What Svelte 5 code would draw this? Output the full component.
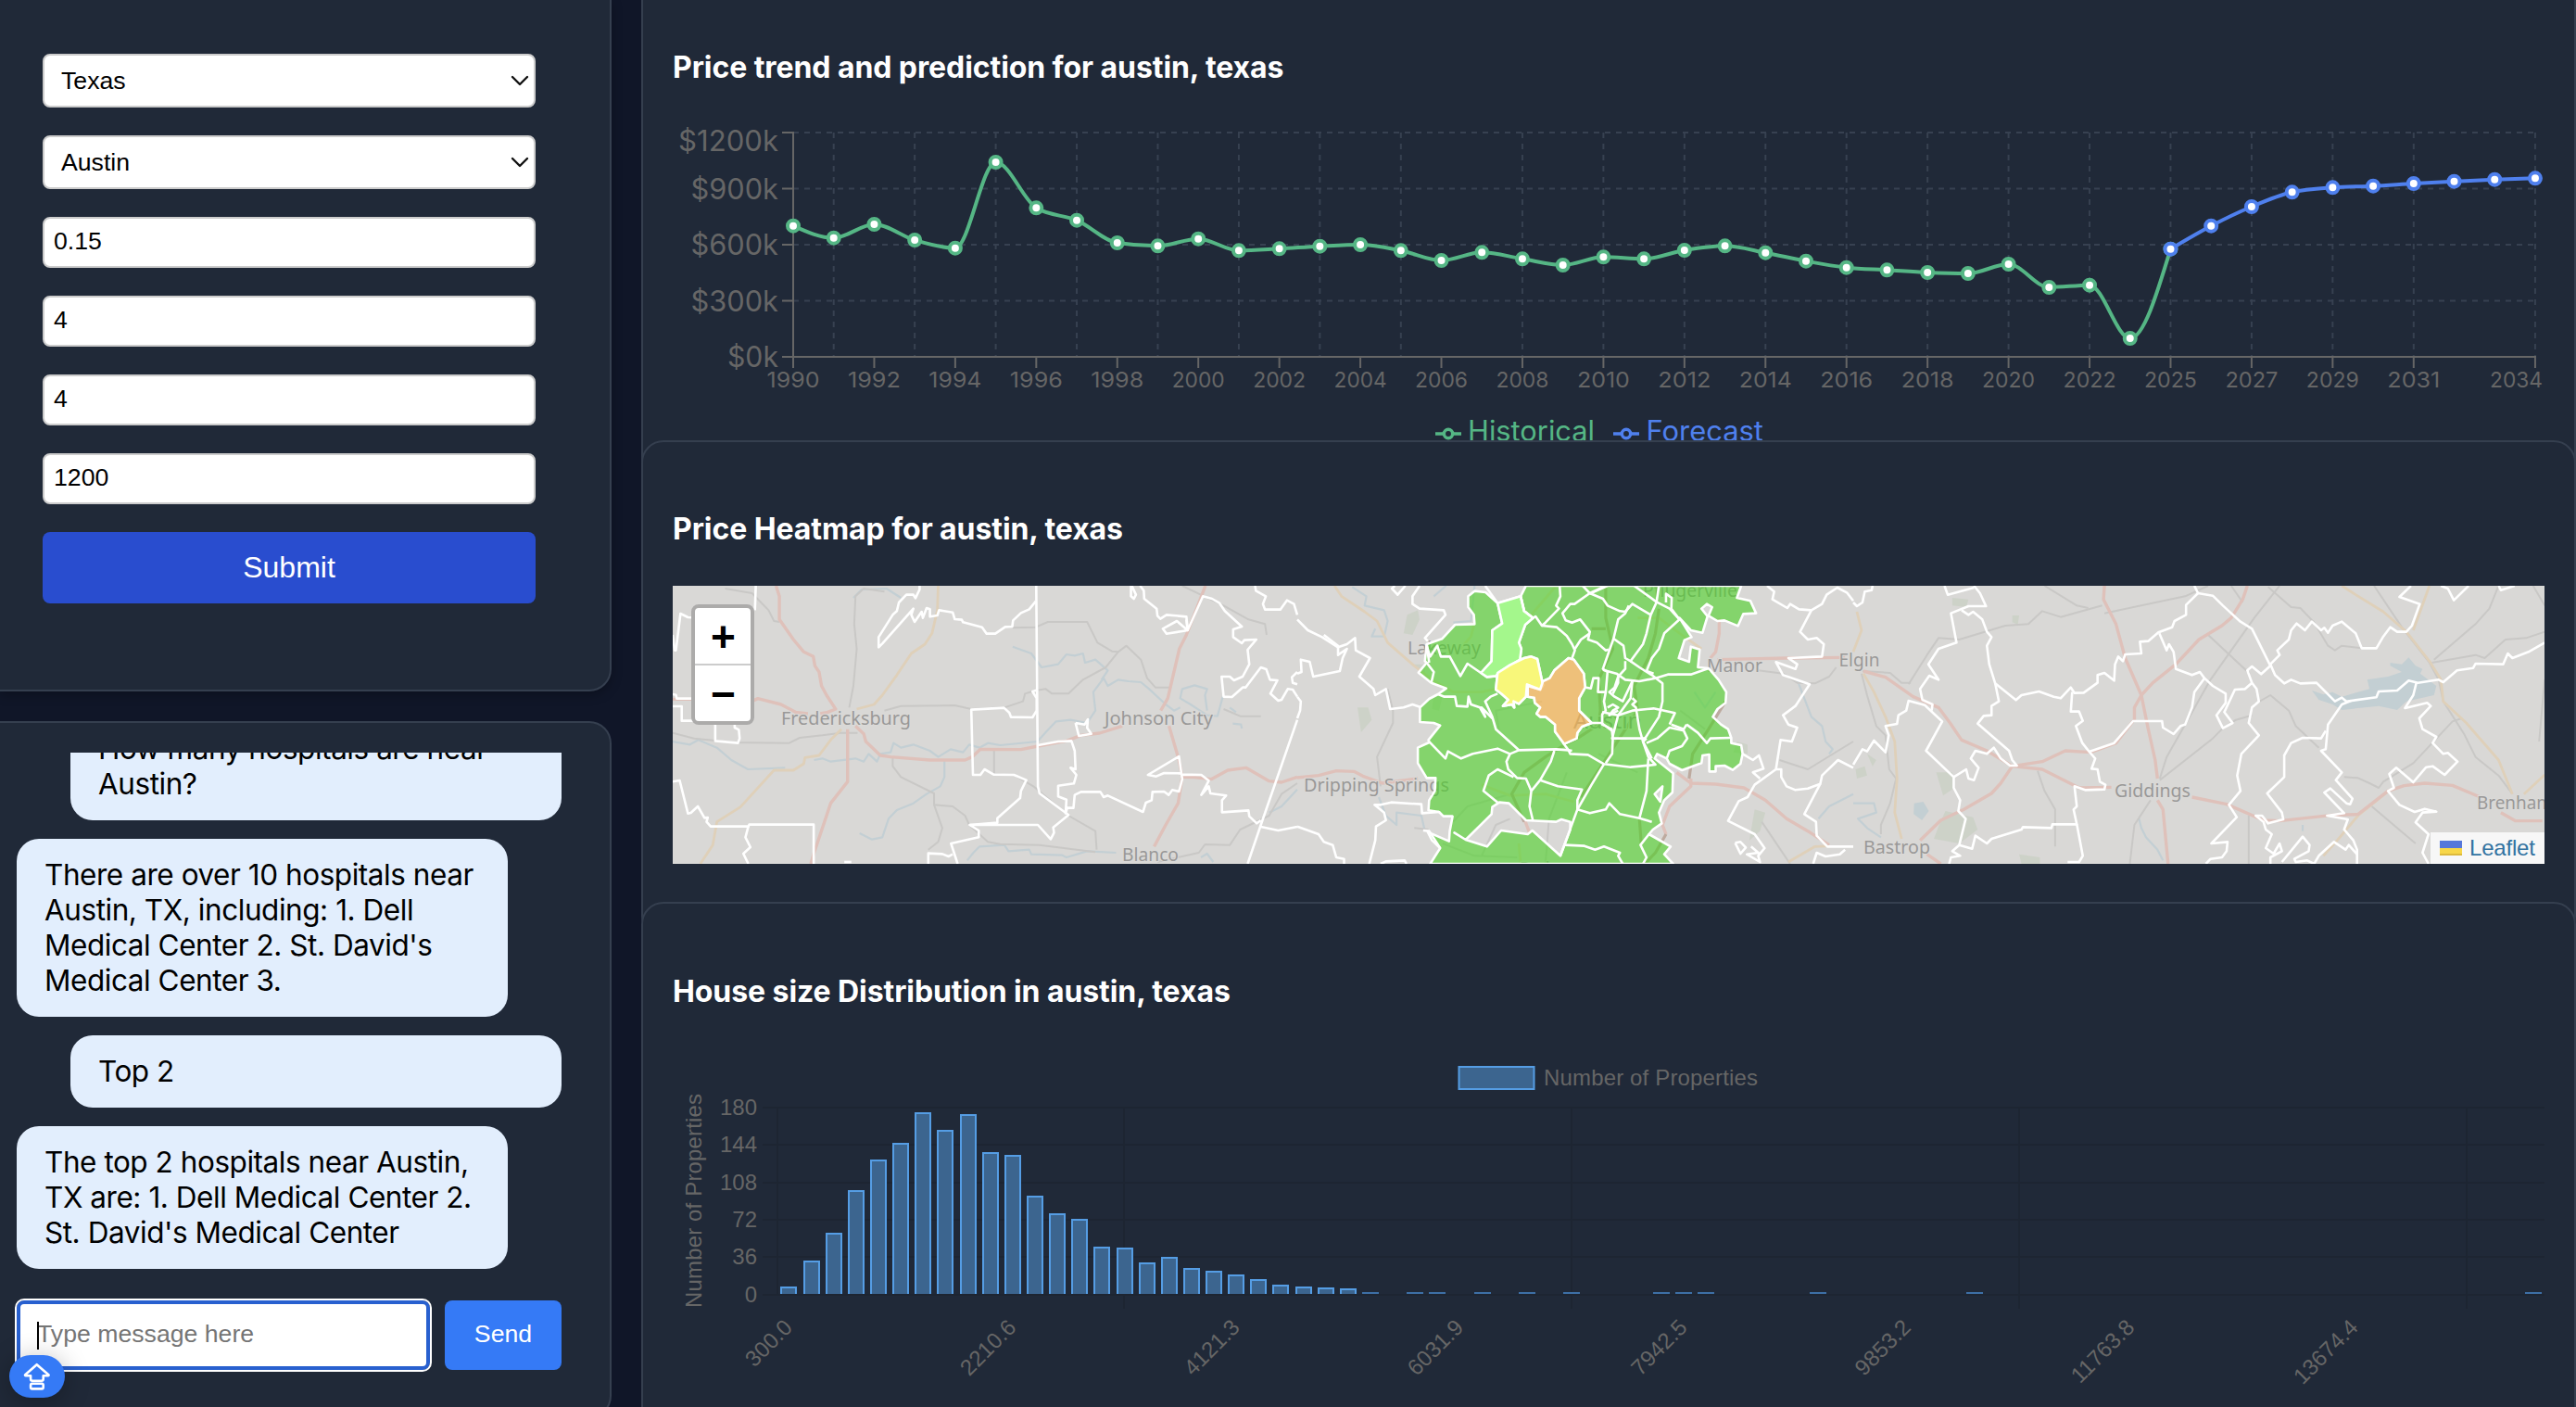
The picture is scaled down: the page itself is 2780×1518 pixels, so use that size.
<script>
  const fields = ['0.15', '4', '4', '1200'];
  const messages = [
    { own: true, lines: ['How many hospitals are near', 'Austin?'] },
    { own: false, lines: ['There are over 10 hospitals near', 'Austin, TX, including: 1. Dell', "Medical Center 2. St. David's", 'Medical Center 3.'] },
    { own: true, lines: ['Top 2'] },
    { own: false, lines: ['The top 2 hospitals near Austin,', 'TX are: 1. Dell Medical Center 2.', "St. David's Medical Center"] }
  ];

  // ---- Price trend ----
  const X0 = 856, STEP = 43.72;
  const years = [...Array.from({ length: 34 }, (_, i) => 1990 + i), ...Array.from({ length: 10 }, (_, i) => 2025 + i)];
  const xOf = (year) => X0 + years.indexOf(year) * STEP;
  const historyY = [243.7, 256.7, 242, 259, 267.7, 175, 224.3, 237.7, 262, 265.3, 257.7, 270.3, 268.3, 265.7, 264, 270.3, 281, 272.3, 279.3, 286, 277.3, 279.3, 270, 265.3, 272.7, 281.7, 288.7, 291.3, 294, 295, 285, 310, 307.7, 365, 268.7];
  const forecastY = [268.7, 243.7, 223, 207.3, 202.3, 200.7, 198, 195.7, 193.7, 192.3];
  const history = historyY.map((y, i) => [X0 + i * STEP, y]);
  const forecast = forecastY.map((y, i) => [X0 + (34 + i) * STEP, y]);
  const trendRows = [['$1200k', 143, 162.5, 108], ['$900k', 203.5, 215, 94.5], ['$600k', 264, 275, 94.5], ['$300k', 324.5, 335.5, 94.5], ['$0k', 385, 395.5, 55]];
  const gridYears = [1991, 1993, 1995, 1997, 1999, 2001, 2003, 2005, 2008, 2010, 2012, 2014, 2016, 2018, 2020, 2022, 2025, 2027, 2029, 2031, 2034];
  const tickYears = [1990, 1992, 1994, 1996, 1998, 2000, 2002, 2004, 2006, 2008, 2010, 2012, 2014, 2016, 2018, 2020, 2022, 2025, 2027, 2029, 2031, 2034];

  // Monotone cubic interpolation through the points
  function curve(p) {
    const n = p.length;
    const s = p.slice(1).map((q, i) => (q[1] - p[i][1]) / (q[0] - p[i][0]));
    const t = new Array(n).fill(0);
    for (let i = 1; i < n - 1; i++) {
      const mean = (s[i - 1] + s[i]) / 2;
      t[i] = (Math.sign(s[i - 1]) + Math.sign(s[i])) * Math.min(Math.abs(s[i - 1]), Math.abs(s[i]), 0.5 * Math.abs(mean));
    }
    t[0] = (3 * s[0] - t[1]) / 2;
    t[n - 1] = (3 * s[n - 2] - t[n - 2]) / 2;
    let d = `M${p[0]}`;
    for (let i = 1; i < n; i++) {
      const h = (p[i][0] - p[i - 1][0]) / 3;
      d += `C${p[i - 1][0] + h},${p[i - 1][1] + h * t[i - 1]} ${p[i][0] - h},${p[i][1] - h * t[i]} ${p[i]}`;
    }
    return d;
  }

  // ---- Heatmap sheets: each has its own origin and horizontal scale ----
  const sheets = [
    {
      tf: 'translate(700 600) scale(.446429 .333333)',
      red: ['308,96 316,130 316,205 350,270 375,310 398,325 402,355 412,375 418,420 430,450 452,495 433,505 415,510', '58,463 112,463 246,472 264,461 320,480 355,505 385,510', '500,550 520,575 525,600 560,645 585,650 680,660 765,660 782,650 802,625 900,626 941,615 1010,598 1045,580 1090,573 1145,550', '481,560 481,730 440,800 425,860 400,960 392,996', '1346,96 1300,255 1283,300 1255,460 1238,500', '1258,550 1282,660 1290,715 1280,800 1250,870 1222,940', '1290,715 1320,716 1360,722 1400,693 1444,685 1500,728 1530,732 1568,715'],
      yellow: ['700,96 698,175 685,250 668,285 635,315 600,385 565,450 545,480 503,495', '466,560 440,595 412,645 378,652 375,672 350,693 303,693 222,812 165,860 155,935 125,996'],
      grey: ['185,105 250,120 290,175 303,210 316,213', '570,115 520,105 500,130 497,220 503,300 495,420 485,490', '570,500 610,485 740,483 780,495 860,490 905,470 910,445 935,435 960,430 975,445 1015,445 1050,400 1105,360 1135,310 1155,290 1190,335 1205,395 1225,425 1260,425', '880,232 936,230 965,213 1060,213 1085,280 1120,308 1135,310', '58,572 110,590 200,603 340,605 365,588 420,580 465,572 505,572', '590,650 590,680 610,715 690,768 690,805 735,810 765,840 775,870 820,925 850,932 945,935 1080,958', '690,805 710,880 700,925 676,950', '835,625 835,705 883,708 930,745 1015,840 1080,890 1083,950', '1290,96 1390,160 1450,205 1490,220 1494,255', '1390,495 1430,518 1480,518', '1568,735 1530,770 1500,840 1430,885 1405,935 1345,933 1330,960 1230,990'],
      blue: ['495,135 515,108 575,105 610,135', '58,600 100,610 120,595 165,620 200,660 240,690 330,685', '400,660 420,655 440,665 500,655 520,665 532,640 552,665 560,640 585,635 592,605 610,620 640,610 680,630 700,650 730,625 760,635 775,610 800,620 820,605 850,612 940,600 960,570 985,535 1020,530 1060,540 1080,500 1075,440 1100,395 1110,420 1135,400 1160,405 1190,408 1210,430 1250,480 1270,500 1285,490', '880,293 925,315 950,360 990,350 1010,318 1030,322 1050,315 1055,345 1080,335 1110,370 1095,400', '1350,500 1345,450 1350,430 1320,418 1290,430 1285,460 1310,480 1350,515 1375,518 1388,455', '510,897 540,917 565,910 580,850 600,822 640,800 672,770 705,745 715,715 715,660', '770,985 785,960 800,940 860,935 870,955 920,950 925,965 1000,968 1010,975 1060,955 1130,960', '1335,975 1350,963 1365,990', '1568,755 1530,810 1500,830', '1405,490 1420,505', '1412,542 1432,545 1434,558'],
      zip: ['259,96 257,175', '58,255 63,305 66,305 77,186 95,198 112,199', '58,447 66,449 68,461 112,461', '58,486 80,486 80,533 112,533', '161,536 161,598 216,605 220,590 218,562 208,555 208,538', '58,730 75,726 95,833 102,831 119,810 135,847 143,846 140,860 150,875 241,875 243,869 399,869 399,996', '241,875 234,910 246,942 229,963 241,996', '473,990 490,990', '655,96 655,108 645,136 640,125 623,125 605,150 600,178 590,190 556,262 556,295 565,283 640,170 635,190 643,213 660,180 663,200 672,168 680,172 680,196 698,192 702,175 735,182 740,204 757,206 760,214 806,230 817,251 838,251 862,229 879,228 881,208 900,184 920,172 936,146', '937,96 941,745 945,768 1015,838 978,878 980,895 972,916 941,870 776,870 798,888 798,910 731,930 747,996', '676,996 676,962 710,964 725,972 735,965', '941,433 928,438 938,460 938,500 928,522 876,521 872,507 859,491 780,497 784,708 802,708 812,690 834,707 883,708 913,725 900,760 898,783 843,848 843,863 776,870', '941,612 990,600 1022,598 1030,630 1032,690 1020,685 1034,708 1028,736 990,743 990,778 1010,788 1008,832 1012,815 1027,815 1030,773 1045,763 1092,763 1100,780 1110,775 1195,828 1202,798 1216,790 1218,763 1246,762 1257,773 1266,757 1282,762 1290,722 1282,648 1207,708 1227,713 1246,702 1284,703 1290,707 1336,708 1354,727 1336,773 1354,745 1358,768 1396,775 1386,790 1386,829 1450,823 1452,842 1470,865 1480,855', '1032,540 1054,545 1062,528 1060,556 1070,575 1040,582 1032,540', '1166,96 1166,130 1173,138 1178,125 1168,96', '1188,96 1197,112 1198,138 1228,170 1230,193 1237,203 1252,190 1300,196 1303,240 1340,130 1362,138 1380,152 1393,178 1434,228 1413,237 1413,262 1434,282 1440,272 1469,270 1448,303 1452,350 1436,390 1415,402 1405,390 1385,390 1390,455 1410,456 1436,425 1443,425 1480,360 1493,366 1502,400 1520,402 1503,445 1522,468 1530,465 1545,430 1557,432 1568,455', '1300,205 1303,240 1277,210 1243,235 1252,251 1290,243 1303,240', '1466,96 1468,112 1492,130 1485,155 1490,173 1527,173 1543,143 1560,155 1568,190', '1568,530 1480,870 1448,996', '1480,876 1522,888 1568,876', '1568,375 1555,392 1557,410 1568,415']
    },
    {
      tf: 'translate(1400 600) scale(.382653 .333333)',
      red: ['1185,335 1380,330 1545,328', '0,717 60,710 110,695 160,697 185,712 240,735 340,720', '1190,200 1190,250 1180,310 1165,330', '1070,700 1110,735 1180,738 1260,750 1320,790 1380,850 1440,890 1500,935', '1110,720 1110,745 1050,810 1030,870 1040,900', '640,850 655,895'],
      yellow: ['105,96 125,130 190,180 225,210 255,280 330,355 380,400 440,440 520,440 560,430', '1385,990 1460,940 1500,938', '500,215 490,260 460,300', '520,740 600,775 700,770 780,795', '730,96 690,150 660,190', '960,200 1020,200 1090,260 1140,300', '630,996 625,930'],
      grey: ['1300,370 1370,380 1410,410 1460,412 1500,390 1520,360', '235,745 225,650 270,540 270,500 255,430', '1310,860 1390,996', '330,880 370,885', '1360,660 1440,690 1568,600', '700,996 710,850 760,700', '690,470 560,500 570,570', '850,640 960,700', '440,860 480,810 600,770', '600,850 560,870 520,970', '410,930 500,970 620,975', '1080,500 1150,560'],
      dark: ['870,96 870,200 890,300 850,400 855,500 850,545 790,590 755,610', '1020,170 1010,250 990,330 950,420 960,500 920,570 880,640 800,780', '1208,470 1160,560 1115,640 1105,720', '755,610 700,650 640,700 605,770 640,860', '1040,900 1010,960 980,996', '965,850 970,930', '830,235 870,235'],
      blue: ['155,100 195,130 190,160 245,175 255,210 245,260 210,260 220,235', '1410,400 1440,490 1450,520 1480,550 1490,600 1510,625 1500,640', '1568,770 1500,810 1470,850', '230,780 250,840 280,870 280,830 350,840 360,890', '385,130 420,96', '440,215 490,210 500,96', '1120,440 1150,490 1180,440'],
      zip: ['740,96 742,130 730,160 738,170 700,215 690,225 672,195 665,200 640,178 630,130', '690,225 732,230 760,258 775,285 783,305 775,330', '870,96 825,120 782,155 770,155 748,185 757,208 775,215 798,205 825,245 820,270 845,280 870,305 878,302', '825,250 800,270 783,300', '805,96 825,120 862,138 875,160 910,178 925,180 945,155 997,190', '825,122 875,96', '1020,96 1013,150 997,190 985,250 975,285 940,340 925,330 920,290 892,267 905,205 925,185 935,160', '950,96 1013,148 1050,170 1078,205 1035,250 1020,300 1000,330 985,372 1005,380', '1040,150 1040,122 1056,135 1055,170 1078,205', '892,267 862,365 875,375 870,440 865,470 870,500 860,512 860,545 887,560 890,590 888,640 870,670', '862,368 900,380 925,400 965,405 1010,395 1045,383 1110,383 1160,363', '940,340 965,360 1000,385 1030,412 1030,470 1020,520 975,600 965,560 955,490 945,480 955,470 945,460', '925,340 925,365 905,390 895,425 880,440 895,455 918,470 945,405', '905,390 905,410 890,445', '860,505 905,515 945,500 1005,493 1065,508 1050,545', '875,490 890,480 905,490 890,500 880,515 905,500', '945,405 940,460 905,515 888,590 985,590', '985,605 1015,590 1050,555 1090,565 1100,590 1085,615 1050,630 1042,655', '1098,545 1130,572 1155,605 1165,590 1224,588', '1055,545 1090,560 1098,545', '975,600 990,650 1010,675 940,683 865,673 820,643 770,640 765,628 750,605', '985,590 975,600 1000,655', '795,500 830,540 858,540 887,565', '815,425 828,428 835,395 850,395 848,440 870,440', '865,673 830,740 790,820 825,832 870,820 880,800 910,835 965,848 1000,860', '990,655 985,760 965,848', '370,598 418,655 425,632 462,655 495,640 565,623 600,640 625,628 730,625 765,628 775,630', '565,445 545,455 530,470 550,520 560,560 625,628', '397,447 415,455 445,455 450,485 480,487 483,455 490,480 515,490 530,520 520,490 550,525', '600,640 590,665 595,690 620,718 645,720 660,760', '610,715 565,690 540,710 525,760 565,797', '725,630 715,665 685,725 660,760 655,810 665,858', '685,725 735,745 803,755 790,790 790,820 742,970', '755,935 810,938 840,950 865,940 910,960 905,970 918,996', '992,900 968,935 985,975 975,996', '365,290 375,325 395,290 405,325 430,325 460,388 480,348 518,378', '365,345 385,375 378,410', '365,285 372,345', '0,205 30,240 70,262 115,295 140,285 163,265 165,305 205,330 175,390 215,430 220,450 250,430 262,495 300,490 325,480 346,488', '0,380 12,375 10,335 35,342 45,390 120,372 128,330 140,300 115,320 115,290 75,255', '0,455 10,470 8,500 0,525', '345,96 325,130 325,155 345,170 413,175 418,190 360,265 368,275', '305,96 283,125 267,105 275,96', '0,875 60,900 75,925 100,935 110,975 132,980 132,996', '203,996 220,920 222,875 250,855 245,830 218,805 235,805 265,797 350,803 352,832 400,828', '235,996 250,988 303,985 308,996', '355,888 372,890 403,945', '1325,96 1345,115 1340,140 1382,168 1390,155 1415,172 1450,175 1418,245 1440,270 1465,265 1485,285 1480,325 1385,330 1410,350 1405,365 1350,343 1370,385 1445,415 1405,485 1370,515 1385,545 1410,555 1395,600 1363,595 1350,690 1290,740 1270,780 1245,793 1215,857 1290,900 1318,945 1300,970 1305,990 1268,965 1300,960 1280,940', '1450,175 1480,155 1493,125 1523,102 1550,118 1568,145', '1256,640 1285,660 1302,645 1315,688 1285,700 1305,720', '1350,690 1365,690 1365,715 1380,745 1405,757 1440,752 1475,737 1480,710 1525,660 1568,685', '1475,737 1430,835 1463,860 1465,905 1495,940 1568,940', '1455,996 1465,960 1490,972 1530,965 1545,950', '1235,928 1250,925 1265,943 1250,963 1235,928', '530,96 565,152']
    },
    {
      tf: 'translate(2000 600) scale(.497449 .333333)',
      red: ['22,372 70,392 130,455 185,490 210,540 235,595 290,630 345,680 410,690 490,750 560,748', '345,680 410,665 460,630 515,635 570,605 607,534', '345,680 320,735 300,768 240,820 190,855 145,920', '160,965 190,996', '545,96 543,140 570,220 590,330 625,450 640,560 655,660 660,720', '855,96 845,140 820,200 800,225 750,270 700,350 650,410 625,450 610,490 610,530', '660,790 672,820 683,996', '735,780 810,803 890,855 925,857 1040,838 1095,836 1160,760 1195,743 1240,735 1300,742 1360,780', '1405,830 1437,857 1495,857'],
      yellow: ['1060,96 1090,125 1150,180 1200,245 1250,340 1275,400 1280,470 1330,540 1400,660 1430,770', '1250,96 1215,240', '22,380 45,440 70,520 90,600 95,720 90,830 105,915', '1160,762 1095,840 1050,920 1020,970', '1500,708 1455,770', '0,310 18,240 8,180'],
      grey: ['1130,96 1190,230 1250,345 1270,400 1280,470 1325,575 1350,650 1400,710 1430,770', '925,96 870,200 775,400 720,545 680,650 665,720', '645,790 610,870 600,996', '18,380 30,450 50,550 70,580 78,690 93,720 80,800 60,870 60,900', '415,96 485,160 510,168', '545,185 720,130 770,96', '120,415 160,320 185,265 230,270 330,225 380,220 410,178 450,197 540,160', '20,372 80,378 105,410 125,410', '770,255 860,380', '820,96 845,150', '900,100 950,165 970,168 1000,215 1030,290 1045,305 1060,290 1103,298', '1255,345 1350,320 1370,330 1415,270 1460,265 1500,245', '1260,335 1350,220 1380,170 1400,96', '870,480 905,450 945,500 960,550 1010,620', '1065,715 1095,718 1120,735 1140,750 1150,730 1215,670 1300,535 1320,525', '1125,810 1180,880 1220,930', '665,725 780,590 800,560 830,530 865,515', '400,695 415,760 438,820 438,940', '858,840 858,996', '1500,400 1488,600', '1500,160 1475,96'],
      blue: ['620,850 625,880 635,910 660,950 672,985', '0,800 45,800 50,830 10,850 30,880 60,910', '975,870 975,890'],
      zip: ['42,96 40,110 25,115 20,150 8,162 0,150', '198,96 205,125 262,102', '262,96 275,120 288,162 250,162 212,185 224,280 185,300 163,350 185,400 165,387 145,430 150,465 172,480 170,500', '235,175 250,190 260,180 280,205 290,245 300,262 290,290 295,350 308,412 353,466 365,450 403,438 435,455 450,460 472,425 480,443 500,442 530,410 530,385 545,378 566,403 568,350 575,325 585,340 590,318 625,315 622,277 640,275 662,247 692,230 697,210 722,190 722,158 748,120 740,96', '748,120 780,128 802,160 820,185 840,212 865,235 880,280 905,355 885,382 865,357 855,370 865,410 875,430 880,470 865,490 858,540 880,580 842,640 833,710 840,760 815,805 832,845 777,930 812,925 810,955 800,975 775,980 765,996', '865,410 850,430 828,432 805,505 823,540 802,557 788,515 808,475 808,445 780,420 762,395 752,375 735,385 700,365 695,310 685,285 680,305 664,250', '762,395 740,440 735,490 720,545 710,550 695,576 672,555 670,534 607,534 566,605 512,633 497,605 483,550 498,533 490,503 472,503 475,440', '905,350 925,320 920,305 945,270 950,240 962,218 980,240 995,212 1015,240 1022,232 1030,248 1040,225 1060,212 1090,250 1103,298 1135,298 1150,260 1165,230 1180,245 1200,245 1212,225 1229,155 1185,132 1210,96', '1275,96 1290,105 1303,143 1335,96', '1400,96 1405,110 1435,96', '905,350 915,385 935,412 950,400 970,412 1005,410 1045,470 1060,458 1070,470 1135,457 1140,438 1180,435 1205,403 1225,410 1270,400 1280,408 1310,370 1345,362 1350,348 1410,350 1420,315 1430,330 1465,310 1500,280', '1222,408 1215,450 1197,492 1245,475 1253,485 1228,525 1235,560 1265,585 1257,605 1280,640 1290,637 1311,665 1283,708 1257,680 1243,683 1215,732 1178,685 1163,705 1173,750 1160,760 1185,805 1218,828 1240,818 1265,827 1235,830 1220,862 1248,900 1235,960 1248,996', '1080,468 1060,480 1030,545 1025,625 1015,630 1060,700 1047,725 1083,785 1078,803 1070,800 1035,752 1022,765 1065,832 1028,840 1073,852 1065,885 1085,920 1093,950 1093,996', '1025,565 1015,590 975,588 950,605 935,645 935,715 898,768 930,830 933,852 900,865 887,840 873,840 890,860 895,885 908,900 895,945 912,963 925,930 930,955 905,975 905,996', '930,990 975,908 990,935 988,955 957,980 960,990 985,985 1000,996 1010,970 1043,925 1068,950 1075,935 1093,965', '308,412 316,470 300,485 300,515 283,517 270,542 338,630 345,660 355,678 340,678 320,655 305,620 290,640 265,630 255,655 272,685 262,725 250,720 245,690 218,715 158,630 193,535 175,510 155,482 120,468 115,500 98,515 95,543 70,550 77,580 70,635 45,597 30,632 20,625 0,675', '218,715 218,750 232,790 228,825 244,850 230,935 258,947 265,905 290,930 300,915 365,885 368,877 430,880 432,868 485,868 478,820 485,810 480,745 503,757 545,755 547,740 535,730 530,690 517,688 525,655 512,633', '485,868 498,970 490,990 465,990', '230,935 215,955 232,970 212,975 208,996']
    }
  ];
  const areaPath = 'M645,96L1252,96L1240,135L1278,145L1294,185L1258,187L1243,226L1205,208L1185,210L1160,193L1170,165L1155,155L1140,170L1157,195L1143,248L1110,240L1078,200L1112,262L1092,272L1076,330L1105,342L1110,293L1135,302L1130,360L1160,363L1188,400L1210,440L1208,475L1185,495L1172,520L1195,545L1215,560L1224,588L1224,605L1252,612L1256,640L1250,672L1228,692L1205,678L1180,680L1180,697L1162,697L1162,642L1143,645L1140,670L1085,693L1050,672L1042,655L1015,640L1008,655L1060,703L1058,765L1035,790L1020,830L1028,865L1003,885L992,900L1053,940L1035,965L1060,996L375,996L403,945L380,920L368,893L428,923L430,890L438,842L412,842L400,828L370,823L372,790L388,760L390,718L365,718L340,670L340,620L372,603L370,595L403,548L385,540L346,537L346,490L372,462L397,447L420,428L378,410L342,377L365,345L360,340L365,285L408,268L445,222L500,220L498,190L482,165L482,130L500,113L531,117L565,152L630,130Z';
  const paleArea = 'M565,152L630,130L640,178L665,200L643,222L625,280L632,300L628,335L570,375L560,388L535,391L518,378L548,340L550,240L578,218Z';
  const yellowArea = 'M565,378L600,352L640,330L660,325L677,333L693,418L685,432L648,415L645,455L625,478L610,470L612,490L605,480L580,485L595,465L575,445L560,432Z';
  const orangeArea = 'M765,330L780,335L808,380L812,425L795,460L795,500L830,540L803,552L790,572L788,590L772,598L753,608L727,568L727,545L700,520L685,520L675,510L685,490L670,475L668,458L650,455L650,420L685,432L693,405L712,395L725,370Z';
  const gapAreas = 'M443,895L475,918L535,940L575,888L650,900L663,888L742,970L770,885L770,860L745,852L730,860L645,855L597,800L570,797L550,812L548,835L475,918ZM1008,770L1030,745L1024,795Z';
  const places = [
    ['Fredericksburg', 843, 781.5, 140, 20], ['Johnson City', 1192, 781.5, 117, 20], ['Blanco', 1211, 928.5, 61, 20],
    ['Lakeway', 1519, 706, 79, 20], ['Pflugerville', 1773, 643.5, 102, 20], ['Austin', 1698, 786, 74, 23], ['Manor', 1842, 724.5, 60, 20],
    ['Dripping Springs', 1407, 854, 157, 20], ['Buda', 1640, 944, 42, 20], ['Elgin', 1984.5, 719, 44, 20], ['Giddings', 2282, 860, 82, 20],
    ['Brenham', 2673, 872.5, 82, 20], ['Bastrop', 2011, 920.5, 72, 20]
  ];

  // ---- House size histogram ----
  const counts = { 0: 7, 1: 32, 2: 59, 3: 100, 4: 129, 5: 145, 6: 175, 7: 158, 8: 173, 9: 136, 10: 134, 11: 94, 12: 77, 13: 72, 14: 45, 15: 44, 16: 30, 17: 35, 18: 25, 19: 22, 20: 18, 21: 14, 22: 9, 23: 7, 24: 6, 25: 5, 26: 1, 28: 1, 29: 1, 31: 1, 33: 1, 35: 1, 39: 1, 40: 1, 41: 1, 46: 1, 53: 1, 78: 1 };
  const bars = Object.entries(counts).map(([i, n]) => ({ x: Math.round(842.4 + 24.14 * i), y: Math.round(1396.6 - n * 1.12), n }));
  const barRows = [[180, 1195], [144, 1235], [108, 1276], [72, 1316], [36, 1356], [0, 1397]];
  const barCols = [839, 1213, 1696, 2179, 2662];
  const sizes = ['300.0', '2210.6', '4121.3', '6031.9', '7942.5', '9853.2', '11763.8', '13674.4'];
</script>

<div class="page">
  <div class="side">
    <section class="card form-card">
      <form>
        {#each ['Texas', 'Austin'] as name}
          <div class="select-wrap">
            <select><option>{name}</option></select>
            <svg class="chevron" viewBox="0 0 20 12"><path d="M2 2l8 8 8-8" /></svg>
          </div>
        {/each}
        {#each fields as value}
          <input class="field" type="text" {value} />
        {/each}
        <button class="submit" type="button">Submit</button>
      </form>
    </section>

    <section class="card chat-card">
      <div class="messages">
        {#each messages as m}
          <div class="bubble" class:own={m.own}>
            {#each m.lines as line}<div>{line}</div>{/each}
          </div>
        {/each}
      </div>
      <div class="composer">
        <div class="entry">
          <input type="text" placeholder="Type message here" />
          <span class="caret"></span>
        </div>
        <button class="send" type="button">Send</button>
      </div>
    </section>
    <div class="pill">
      <svg viewBox="0 0 30 30"><path d="M14.7 2.2L27.4 13.2Q28 14.2 26.8 14.2H21.7V17.8Q21.7 19.7 19.8 19.7H10Q8.1 19.7 8.1 17.8V14.2H2.8Q1.6 14.2 2.2 13.2Z" /><rect x="8.1" y="22.8" width="13.6" height="5.6" rx="1.6" /></svg>
    </div>
  </div>

  <main>
    <section class="card trend">
      <h2>Price trend and prediction for austin, texas</h2>
      <svg class="plot" viewBox="726 111 2020 380">
        <g class="grid">
          {#each trendRows.slice(0, 4) as row}<path d="M856 {row[1]}H2736" />{/each}
          {#each gridYears as y}<path d="M{xOf(y)} 143V385" />{/each}
        </g>
        <g class="axis">
          <path d="M856 142V386M856 385H2737" />
          {#each trendRows as row}<path d="M844 {row[1]}H856" />{/each}
          {#each tickYears as y}<path d="M{xOf(y)} 385V397" />{/each}
        </g>
        {#each trendRows as row}
          <text class="ylab" x={840 - row[3]} y={row[2]} textLength={row[3]} lengthAdjust="spacingAndGlyphs">{row[0]}</text>
        {/each}
        {#each tickYears as y}
          <text class="xlab" x={y === 2034 ? 2687 : xOf(y) - 28.5} y="418" textLength="57" lengthAdjust="spacingAndGlyphs">{y}</text>
        {/each}
        <g class="past">
          <path d={curve(history)} />
          {#each history as p}<circle cx={p[0]} cy={p[1]} r="6" />{/each}
        </g>
        <g class="future">
          <path d={curve(forecast)} />
          {#each forecast as p}<circle cx={p[0]} cy={p[1]} r="6" />{/each}
        </g>
        <g class="key past">
          <path d="M1549 468h9.3M1567.7 468h9.3" /><circle cx="1563" cy="468" r="4.7" />
          <text x="1584" y="475.5" textLength="137" lengthAdjust="spacingAndGlyphs">Historical</text>
        </g>
        <g class="key future">
          <path d="M1741 468h9.3M1759.7 468h9.3" /><circle cx="1755" cy="468" r="4.7" />
          <text x="1776.5" y="475.5" textLength="126.5" lengthAdjust="spacingAndGlyphs">Forecast</text>
        </g>
      </svg>
    </section>

    <section class="card heat">
      <h2>Price Heatmap for austin, texas</h2>
      <div class="map">
        <svg viewBox="726 632 2020 300">
          <g transform={sheets[1].tf} class="wood">
            <path d="M310,190l30,-15l5,30l-20,50l-25,-5zM170,490l30,0l10,40l-30,40zM1290,820l30,10l-15,60l-30,30zM1240,600l30,10l0,30l-40,-5zM385,450l25,0l-10,50l-20,-5zM320,350l40,0l0,30z" />
          </g>
          <g transform={sheets[2].tf} class="wood">
            <path d="M180,700l35,0l5,50l-25,25zM200,825l60,20l10,40l-40,45l-55,-15l10,-40zM30,640l20,20l-8,20zM5,690l20,-10l5,30l-22,10zM215,135l35,5l-5,25l-30,-5zM345,192l15,0l-3,30l-12,-8zM360,965l45,10l0,21l-40,0z" />
          </g>
          {#each sheets as s}
            <g transform={s.tf} class="tiles">
              <g class="water">{#each s.blue as p}<polyline points={p} />{/each}</g>
              <g class="minor">{#each s.grey as p}<polyline points={p} />{/each}</g>
              <g class="second">{#each s.yellow as p}<polyline points={p} />{/each}</g>
              <g class="trunk">{#each s.red as p}<polyline points={p} />{/each}</g>
              <g class="motorway">{#each s.dark ?? [] as p}<polyline points={p} />{/each}</g>
            </g>
          {/each}
          <g transform={sheets[2].tf}>
            <path class="lake" d="M1165,345L1190,350L1205,328L1220,355L1235,365L1230,380L1265,420L1260,450L1200,470L1180,498L1140,485L1060,498L1040,480L1010,465L995,435L1020,448L1040,440L1060,455L1120,430L1115,400L1160,390L1190,375L1165,355ZM132,800l20,-5l12,30l-15,30l-18,-20z" />
          </g>
          {#each places as p}
            <text class="place" x={p[1]} y={p[2]} font-size={p[4]} textLength={p[3]} lengthAdjust="spacingAndGlyphs">{p[0]}</text>
          {/each}
          <g transform={sheets[1].tf} class="areas">
            <path class="low" fill-rule="evenodd" d={areaPath + paleArea + yellowArea + orangeArea + gapAreas} />
            <path class="pale" d={paleArea} />
            <path class="mid" d={yellowArea} />
            <path class="high" d={orangeArea} />
          </g>
          {#each sheets as s}
            <g transform={s.tf} class="zips">{#each s.zip as p}<polyline points={p} />{/each}</g>
          {/each}
        </svg>
        <div class="zoom"><span>+</span><span>−</span></div>
        <div class="credit">
          <svg viewBox="0 0 24 16"><path fill="#5677da" d="M0 0h24v8H0z" /><path fill="#f7d648" d="M0 8h24v6H0z" /><path fill="#dcb93c" d="M0 14h24v2H0z" /></svg>
          <span>Leaflet</span>
        </div>
      </div>
    </section>

    <section class="card dist">
      <h2>House size Distribution in austin, texas</h2>
      <svg class="plot" viewBox="726 1130 2020 388">
        <g class="rule">
          {#each barRows as r}<path d="M823 {r[1]}H2746" />{/each}
          {#each barCols as c}<path d="M{c} 1195V{c === 839 ? 1397 : 1412}" />{/each}
        </g>
        {#each bars as b}
          {#if b.n > 1}
            <rect class="fill" x={b.x} y={b.y} width="18" height={1396 - b.y} />
            <path class="edge" d="M{b.x + 1} 1396V{b.y}H{b.x + 17}V1396" />
          {:else}
            <rect class="sliver" x={b.x} y="1394" width="18" height="2" />
          {/if}
        {/each}
        <rect class="fill" x="1574" y="1151" width="81" height="24" />
        <rect class="edge" x="1574.5" y="1151" width="81" height="24" />
        <g class="num">
          <text x="1666" y="1171" textLength="231">Number of Properties</text>
          <text text-anchor="middle" transform="translate(756.5 1295.5) rotate(-90)" textLength="231">Number of Properties</text>
          {#each barRows as r}<text text-anchor="end" x="817" y={r[1] + 7.5}>{r[0]}</text>{/each}
          {#each sizes as s, i}<text text-anchor="end" transform="translate({856.5 + 241.4 * i} 1433.5) rotate(-45)">{s}</text>{/each}
        </g>
      </svg>
    </section>
  </main>
</div>

<style>
  :global(body) { margin: 0; background: #101628; }
  .page {
    display: flex; gap: 32px; width: 2780px; height: 1518px; overflow: hidden;
    background: #101628; font-family: Inter, "Liberation Sans", sans-serif;
  }
  .card { box-sizing: border-box; background: #202938; border: 2px solid #353f4f; }
  .side { position: relative; flex: 0 0 660px; display: flex; flex-direction: column; gap: 32px; }
  .side .card { flex: none; }
  .form-card { height: 746px; padding: 58px 80px 0 46px; border-width: 0 2px 2px 0; border-radius: 0 0 24px 0; box-shadow: 0 4px 12px rgba(0, 0, 0, .25); }
  form { display: grid; gap: 30px; }
  .select-wrap { display: grid; align-items: center; height: 58px; }
  .select-wrap > * { grid-area: 1 / 1; }
  select, .field {
    box-sizing: border-box; width: 532px; margin: 0; border: 2px solid #ccc; border-radius: 8px; background: #fff;
    color: #000; font: 26.67px "Liberation Sans", sans-serif; appearance: none; outline: 0;
  }
  select { height: 58px; padding: 0 18px; }
  .field { height: 55px; padding: 0 10px 2px; }
  .chevron { justify-self: end; width: 20px; height: 12px; margin-right: 7px; fill: none; stroke: #111; stroke-width: 2.4; stroke-linecap: round; stroke-linejoin: round; }
  button { border: 0; border-radius: 8px; color: #fff; font-family: "Liberation Sans", sans-serif; padding: 0; }
  .submit { height: 77px; width: 532px; background: #294dcf; font-size: 32px; padding-bottom: 1px; }

  .chat-card { height: 752px; padding: 32px 52px 0 18px; border-width: 2px 2px 2px 0; border-radius: 0 24px 24px 0; }
  .messages { display: flex; flex-direction: column; justify-content: flex-end; gap: 20px; height: 557px; overflow: hidden; }
  .bubble {
    flex: none; box-sizing: border-box; width: 530px; padding: 20px 30px; border-radius: 24px; background: #e2eefd;
    color: #000; font-size: 31.5px; line-height: 38px; letter-spacing: -.45px; white-space: nowrap;
  }
  .own { align-self: flex-end; }
  .composer { display: flex; gap: 16px; margin-top: 34px; }
  .entry { position: relative; width: 446px; height: 75px; }
  .entry input {
    box-sizing: border-box; width: 446px; height: 75px; border: 4px solid #2860cf; border-radius: 8px; outline: 2px solid #fff;
    padding: 0 18px 2px; background: #fff; font: 26.67px "Liberation Sans", sans-serif;
  }
  .entry input::placeholder { color: #757575; opacity: 1; }
  .caret { position: absolute; left: 22px; top: 23px; width: 2px; height: 30px; background: #000; }
  .send { width: 126px; height: 75px; background: #357af6; font-size: 26.67px; padding-bottom: 2px; }
  .pill {
    position: absolute; left: 10px; top: 1462px; width: 60px; height: 46px; border-radius: 23px; background: #357af6;
    box-shadow: 0 4px 28px rgba(0, 0, 0, .28); display: grid; place-items: center;
  }
  .pill svg { width: 30px; height: 30px; fill: none; stroke: #fff; stroke-width: 2.6; stroke-linejoin: round; }

  main { flex: 1; display: flex; flex-direction: column; min-width: 0; }
  main .card { flex: none; position: relative; padding: 0 32px; border-radius: 24px; overflow: hidden; }
  h2 { margin: 0; color: #fff; font-size: 32px; line-height: 38px; font-weight: 650; letter-spacing: -.08px; white-space: nowrap; }
  .plot { display: block; width: 2020px; }
  main .trend { height: 515px; margin-bottom: -40px; padding-top: 54px; border-top: 0; border-radius: 0; }
  .trend .plot { height: 380px; margin-top: 19px; }
  main .heat { height: 538px; margin-bottom: -40px; padding-top: 75px; }
  .map { position: relative; width: 2020px; height: 300px; margin-top: 42px; background: #d9d8d6; overflow: hidden; }
  .map > svg { display: block; width: 2020px; height: 300px; }
  main .dist { height: 585px; padding-top: 76px; }
  .dist .plot { height: 388px; margin-top: 41px; }

  .grid path { fill: none; stroke: #374151; stroke-width: 2; stroke-dasharray: 6 6; }
  .axis path { fill: none; stroke: #666; stroke-width: 2; }
  .ylab { fill: #666; font-size: 31px; }
  .xlab { fill: #666; font-size: 23.5px; }
  .past { stroke: #55b685; }
  .future { stroke: #4f80ee; }
  .past path, .future path { fill: none; stroke-width: 4; }
  .past circle, .future circle { fill: #fff; stroke-width: 4; }
  .trend .key circle { fill: none; stroke-width: 3.5; }
  .trend .key path { stroke-width: 3.5; }
  .ylab, .xlab, .key text { stroke: none; }
  .key text { font-size: 31px; }
  .key.past text { fill: #55b685; }
  .key.future text { fill: #4f80ee; }

  .tiles polyline, .zips polyline { fill: none; vector-effect: non-scaling-stroke; stroke-linejoin: round; }
  .water { stroke: #c3cfd4; stroke-width: 2.2; }
  .minor { stroke: #c9c8c6; stroke-width: 2; }
  .second { stroke: #dfd0b9; stroke-width: 2.8; }
  .trunk { stroke: #dfc1ba; stroke-width: 3.4; }
  .motorway { stroke: #bdaa9f; stroke-width: 3.2; }
  .zips { stroke: #fff; stroke-width: 2.6; }
  .wood { fill: #cdd2c8; }
  .lake { fill: #c3cfd3; }
  .place { font-family: "Noto Sans", sans-serif; fill: #999897; stroke: #dbdad8; stroke-width: 2; paint-order: stroke; }
  .areas path { stroke: #fff; stroke-width: 2.6; vector-effect: non-scaling-stroke; stroke-linejoin: round; }
  .low { fill: #4bd225; fill-opacity: .6; }
  .pale { fill: #96ff79; fill-opacity: .8; }
  .mid { fill: #ffff63; fill-opacity: .8; }
  .high { fill: #f9b448; fill-opacity: .65; }

  .zoom { position: absolute; left: 20px; top: 20px; width: 60px; border: 4px solid #acabaa; border-radius: 8px; background: #fff; overflow: hidden; }
  .zoom span { display: block; box-sizing: border-box; height: 62px; padding-top: 3px; padding-left: 1px; color: #000; font: bold 46px/57px "Liberation Sans", sans-serif; text-align: center; border-bottom: 2px solid #ccc; }
  .zoom span:last-child { height: 60px; border: 0; }
  .credit { position: absolute; right: 0; bottom: 0; display: flex; align-items: center; gap: 8px; box-sizing: border-box; width: 123px; height: 34px; padding-left: 10px; background: #f7f7f7; color: #3273a1; font: 24px/34px "Liberation Sans", sans-serif; }
  .credit span { letter-spacing: -.2px; margin-top: -1px; }
  .credit svg { width: 24px; height: 16px; }

  .rule path { fill: none; stroke: #1d2532; stroke-width: 2; }
  .fill { fill: #3c658f; }
  .edge { fill: none; stroke: #559de4; stroke-width: 2; }
  .sliver { fill: #3d6fa6; }
  .num { fill: #666; font: 24px "Liberation Sans", sans-serif; }
</style>
